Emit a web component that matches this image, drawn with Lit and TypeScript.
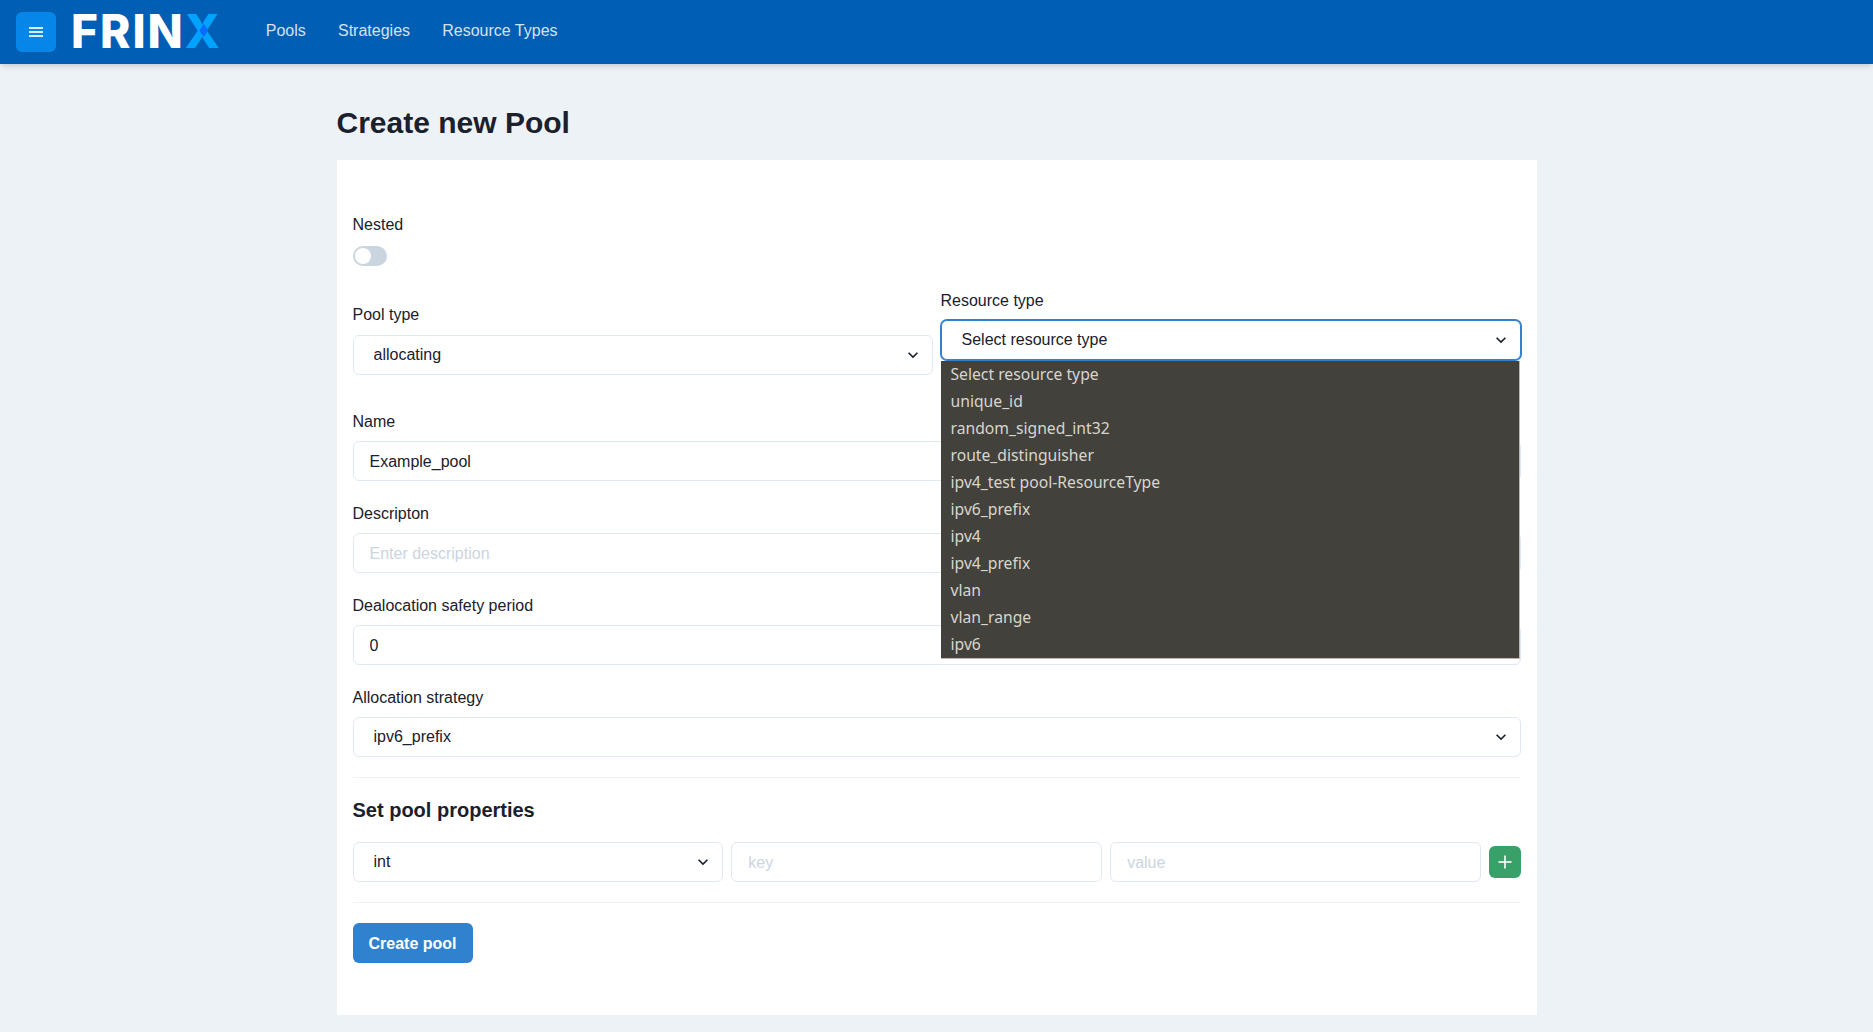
import { LitElement, css, html } from "lit";
import { customElement } from "lit/decorators.js";

const RESOURCE_TYPES = [
  "Select resource type",
  "unique_id",
  "random_signed_int32",
  "route_distinguisher",
  "ipv4_test pool-ResourceType",
  "ipv6_prefix",
  "ipv4",
  "ipv4_prefix",
  "vlan",
  "vlan_range",
  "ipv6",
];

const NAV_LINKS = ["Pools", "Strategies", "Resource Types"];

@customElement("app-root")
export class AppRoot extends LitElement {
  static styles = css`
    :host {
      display: block;
      min-height: 1032px;
      background: #edf2f7;
      color: #1a202c;
      font-family: "Liberation Sans", Arial, sans-serif;
      font-size: 16px;
      line-height: 24px;
    }

    * {
      box-sizing: border-box;
    }

    .header {
      position: relative;
      z-index: 3;
      display: flex;
      align-items: center;
      height: 64px;
      padding-left: 16px;
      background: #005eb4;
      box-shadow: 0 4px 6px -1px rgba(0, 0, 0, 0.1), 0 2px 4px -1px rgba(0, 0, 0, 0.06);
    }

    .menu-button {
      display: flex;
      align-items: center;
      justify-content: center;
      width: 40px;
      height: 40px;
      padding: 0;
      border: none;
      border-radius: 6px;
      background: #0686e8;
      color: #d8edfc;
    }

    .logo {
      position: relative;
      margin: 0 0 2px 15px;
      color: #fff;
      font-family: Inter, "Liberation Sans", sans-serif;
      font-size: 46px;
      font-weight: 800;
      line-height: 48px;
      letter-spacing: 2px;
    }

    .logo-x {
      color: #00a3ff;
    }

    /* darker crossing of the X */
    .logo-cross {
      position: absolute;
      right: 13.5px;
      top: 17px;
      width: 9px;
      height: 13px;
      background: #0a6cff;
      clip-path: polygon(50% 0, 100% 50%, 50% 100%, 0 50%);
    }

    .nav {
      display: flex;
      gap: 32.2px;
      margin: 0 0 2px 44px;
    }

    .nav a {
      color: #d6e2ee;
      text-decoration: none;
    }

    .page {
      width: 1200px;
      margin: 0 auto;
    }

    h1 {
      margin: 39px 0 17px;
      font-size: 30px;
      line-height: 40px;
      font-weight: 700;
    }

    .card {
      padding: 52px 16px;
      background: #fff;
    }

    .control {
      margin-bottom: 20px;
    }

    label {
      display: block;
      padding-top: 1px;
      margin-bottom: 7px;
    }

    .switch-line {
      display: flex;
      align-items: center;
      height: 24px;
    }

    .switch {
      width: 34px;
      height: 20px;
      padding: 2px;
      border-radius: 10px;
      background: #cbd5e0;
    }

    .switch span {
      display: block;
      width: 16px;
      height: 16px;
      border-radius: 50%;
      background: #fff;
    }

    .type-row {
      display: flex;
      gap: 8px;
      margin-bottom: 34px;
    }

    .type-row > div {
      position: relative;
      flex: 1;
      min-width: 0;
    }

    .pool-type {
      padding-top: 14px;
    }

    .pool-type label {
      margin-bottom: 8px;
    }

    input,
    select {
      display: block;
      width: 100%;
      height: 40px;
      padding: 2px 16px 0;
      border: 1px solid #e2e8f0;
      border-radius: 6px;
      outline: none;
      background: #fff;
      color: #1a202c;
      font: inherit;
    }

    input::placeholder {
      color: #cbd5e0;
      opacity: 1;
    }

    select {
      appearance: none;
      padding: 0 32px 0 20px;
    }

    select.focused {
      border-color: #3182ce;
      box-shadow: 0 0 0 1px #3182ce;
    }

    .select-wrap {
      position: relative;
    }

    .select-wrap svg {
      position: absolute;
      right: 10px;
      top: 10px;
      width: 20px;
      height: 20px;
      fill: currentColor;
      pointer-events: none;
    }

    .dropdown {
      position: absolute;
      z-index: 2;
      left: 0;
      right: 1px;
      top: 73px;
      margin: 0;
      padding: 0;
      list-style: none;
      background: #43413c;
      border-right: 1px solid #bdb9b1;
      border-bottom: 1px solid #bdb9b1;
      color: #d8d5ce;
      font-family: "Noto Sans", sans-serif;
      font-size: 15.7px;
    }

    .dropdown li {
      height: 27px;
      padding-left: 10px;
      line-height: 27px;
    }

    .divider {
      height: 1px;
      margin-bottom: 20px;
      background: #edf2f7;
    }

    h2 {
      margin: 0 0 20px;
      font-size: 20px;
      line-height: 24px;
      font-weight: 700;
    }

    .property-row {
      display: grid;
      grid-template-columns: 1fr 1fr 1fr 32px;
      align-items: center;
      gap: 8px;
      margin: 0 -0.5px 20px 0;
    }

    .add-button {
      display: flex;
      align-items: center;
      justify-content: center;
      width: 32px;
      height: 32px;
      padding: 0;
      border: none;
      border-radius: 6px;
      background: #38a169;
      color: #fff;
    }

    .create-button {
      display: block;
      height: 40px;
      padding: 1px 16px 0;
      border: none;
      border-radius: 6px;
      background: #3182ce;
      color: #fff;
      font: inherit;
      font-weight: 700;
    }
  `;

  selectBox(options: string[], focused = false) {
    return html`
      <div class="select-wrap">
        <select class=${focused ? "focused" : ""}>
          ${options.map((o) => html`<option>${o}</option>`)}
        </select>
        <svg viewBox="0 0 24 24"><path d="M16.59 8.59L12 13.17 7.41 8.59 6 10l6 6 6-6z"></path></svg>
      </div>
    `;
  }

  render() {
    return html`
      <header class="header">
        <button class="menu-button" aria-label="Menu">
          <svg width="14" height="12" viewBox="0 0 14 12" fill="currentColor">
            <rect y="1" width="14" height="2"></rect>
            <rect y="5" width="14" height="2"></rect>
            <rect y="9" width="14" height="2"></rect>
          </svg>
        </button>
        <div class="logo">FRIN<span class="logo-x">X</span><span class="logo-cross"></span></div>
        <nav class="nav">
          ${NAV_LINKS.map((l) => html`<a href="#">${l}</a>`)}
        </nav>
      </header>

      <main class="page">
        <h1>Create new Pool</h1>
        <div class="card">
          <div class="control">
            <label>Nested</label>
            <div class="switch-line"><div class="switch"><span></span></div></div>
          </div>

          <div class="type-row">
            <div class="pool-type">
              <label>Pool type</label>
              ${this.selectBox(["allocating", "set", "singleton"])}
            </div>
            <div>
              <label>Resource type</label>
              ${this.selectBox(RESOURCE_TYPES, true)}
              <ul class="dropdown">
                ${RESOURCE_TYPES.map((t) => html`<li>${t}</li>`)}
              </ul>
            </div>
          </div>

          <div class="control">
            <label>Name</label>
            <input value="Example_pool" />
          </div>
          <div class="control">
            <label>Descripton</label>
            <input placeholder="Enter description" />
          </div>
          <div class="control">
            <label>Dealocation safety period</label>
            <input value="0" />
          </div>
          <div class="control">
            <label>Allocation strategy</label>
            ${this.selectBox(["ipv6_prefix"])}
          </div>

          <div class="divider"></div>
          <h2>Set pool properties</h2>
          <div class="property-row">
            ${this.selectBox(["int", "string"])}
            <input placeholder="key" />
            <input placeholder="value" />
            <button class="add-button" aria-label="Add property">
              <svg width="14" height="14" viewBox="0 0 14 14" fill="currentColor">
                <rect x="6.2" y="0.5" width="1.6" height="13"></rect>
                <rect x="0.5" y="6.2" width="13" height="1.6"></rect>
              </svg>
            </button>
          </div>
          <div class="divider"></div>
          <button class="create-button">Create pool</button>
        </div>
      </main>
    `;
  }
}
